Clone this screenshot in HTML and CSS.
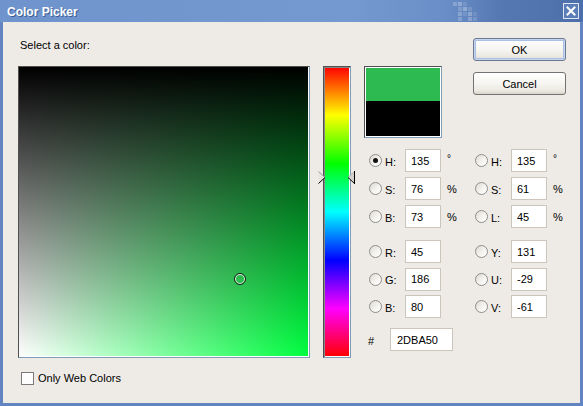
FILE: index.html
```html
<!DOCTYPE html>
<html>
<head>
<meta charset="utf-8">
<title>Color Picker</title>
<link rel="stylesheet" href="styles.css">
</head>
<body>
<div class="window">
  <div class="titlebar">
    <span class="title">Color Picker</span>
    <svg class="deco" width="28" height="22" viewBox="0 0 28 22">
      <rect x="0" y="2" width="4" height="4" fill="#fff" opacity=".22"/>
      <rect x="5" y="2" width="4" height="4" fill="#fff" opacity=".28"/>
      <rect x="10" y="2" width="4" height="4" fill="#fff" opacity=".12"/>
      <rect x="5" y="7" width="4" height="4" fill="#fff" opacity=".18"/>
      <rect x="10" y="7" width="4" height="4" fill="#fff" opacity=".3"/>
      <rect x="15" y="7" width="4" height="4" fill="#fff" opacity=".14"/>
      <rect x="5" y="12" width="4" height="4" fill="#fff" opacity=".24"/>
      <rect x="10" y="12" width="4" height="4" fill="#fff" opacity=".12"/>
      <rect x="15" y="12" width="4" height="4" fill="#fff" opacity=".28"/>
      <rect x="20" y="12" width="4" height="4" fill="#fff" opacity=".1"/>
      <rect x="5" y="17" width="4" height="4" fill="#fff" opacity=".2"/>
      <rect x="15" y="17" width="4" height="4" fill="#fff" opacity=".24"/>
      <rect x="20" y="17" width="4" height="4" fill="#fff" opacity=".14"/>
    </svg>
    <div class="close">
      <svg width="14" height="14" viewBox="0 0 14 14"><path d="M3.5 3.5 L10.5 10.5 M10.5 3.5 L3.5 10.5" stroke="#fff" stroke-width="2" stroke-linecap="square"/></svg>
    </div>
  </div>
  <div class="body">
    <div class="pick-col">
      <div class="prompt">Select a color:</div>
      <div class="field sunken"><div class="marker"></div></div>
      <label class="check"><span class="box"></span>Only Web Colors</label>
    </div>
    <div class="hue sunken">
      <svg class="arrow arrow-left" width="8" height="13" viewBox="0 0 8 13">
        <polygon points="0.5,0.5 7,6.5 0.5,12.5" fill="#e6e4df"/>
        <path d="M0.5 0.5 L7 6.5" stroke="#9a9a9a" stroke-width="1" fill="none"/>
        <path d="M0.5 12.5 L7 6.5" stroke="#000" stroke-width="1" fill="none"/>
      </svg>
      <svg class="arrow arrow-right" width="8" height="13" viewBox="0 0 8 13">
        <polygon points="7.5,0.5 1,6.5 7.5,12.5" fill="#d4d2cc"/>
        <path d="M7.5 0.5 L1 6.5" stroke="#b0b0b0" stroke-width="1" fill="none"/>
        <path d="M7.5 0 L7.5 13 M1 6.5 L7.5 12.5" stroke="#000" stroke-width="1" fill="none"/>
      </svg>
    </div>
    <div class="side">
      <div class="side-top">
        <div class="swatch sunken">
          <div class="swatch-new"></div>
          <div class="swatch-old"></div>
        </div>
        <div class="buttons">
          <button class="btn btn-default">OK</button>
          <button class="btn">Cancel</button>
        </div>
      </div>
      <div class="fields">
        <div class="grid">
          <div class="cell"><span class="radio on"></span><span class="lbl">H:</span><input class="num" value="135"><span class="unit deg">°</span></div>
          <div class="cell"><span class="radio"></span><span class="lbl">H:</span><input class="num" value="135"><span class="unit deg">°</span></div>
          <div class="cell"><span class="radio"></span><span class="lbl">S:</span><input class="num" value="76"><span class="unit">%</span></div>
          <div class="cell"><span class="radio"></span><span class="lbl">S:</span><input class="num" value="61"><span class="unit">%</span></div>
          <div class="cell"><span class="radio"></span><span class="lbl">B:</span><input class="num" value="73"><span class="unit">%</span></div>
          <div class="cell"><span class="radio"></span><span class="lbl">L:</span><input class="num" value="45"><span class="unit">%</span></div>
        </div>
        <div class="grid grid-2">
          <div class="cell"><span class="radio"></span><span class="lbl">R:</span><input class="num" value="45"></div>
          <div class="cell"><span class="radio"></span><span class="lbl">Y:</span><input class="num" value="131"></div>
          <div class="cell"><span class="radio"></span><span class="lbl">G:</span><input class="num" value="186"></div>
          <div class="cell"><span class="radio"></span><span class="lbl">U:</span><input class="num" value="-29"></div>
          <div class="cell"><span class="radio"></span><span class="lbl">B:</span><input class="num" value="80"></div>
          <div class="cell"><span class="radio"></span><span class="lbl">V:</span><input class="num" value="-61"></div>
        </div>
        <div class="hex"><span class="hash">#</span><input class="hex-input" value="2DBA50"></div>
      </div>
    </div>
  </div>
</div>
</body>
</html>
```

FILE: styles.css
```css
html, body {
  margin: 0;
  padding: 0;
}
body {
  font-family: "Liberation Sans", Arial, sans-serif;
  font-size: 11px;
  color: #000;
}
.window {
  width: 583px;
  height: 406px;
  display: flex;
  flex-direction: column;
  background: #6285c2;
}
.titlebar {
  height: 22px;
  flex: none;
  display: flex;
  align-items: flex-start;
  background: linear-gradient(to right, #6f93cc 0%, #7499d0 60%, #6a8fc8 76%, #5678b2 86%, #4c6fab 100%);
}
.title {
  padding: 1px 0 0 7px;
  line-height: 22px;
  font-size: 12px;
  font-weight: bold;
  color: #fff;
  text-shadow: 1px 1px 0 #3d5d94;
}
.deco {
  margin-left: auto;
  display: block;
}
.close {
  margin: 3px 4px 0 82px;
  width: 16px;
  height: 16px;
  box-sizing: border-box;
  border: 1px solid #dfe6f2;
  background: #5b7db8;
  display: flex;
  align-items: center;
  justify-content: center;
}
.close svg { display: block; }
.body {
  flex: 1;
  margin: 0 3px 3px;
  background: #eeebe6;
  display: flex;
  align-items: flex-start;
  padding: 16px 0 0 15px;
}
.sunken {
  box-sizing: border-box;
  border: 1px solid;
  border-color: #505050 #7f9db9 #7f9db9 #505050;
  box-shadow: inset -1px -1px 0 #fff;
}
.pick-col {
  width: 292px;
  display: flex;
  flex-direction: column;
}
.prompt {
  margin-top: 1px;
  padding-left: 2px;
  line-height: 13px;
}
.field {
  margin-top: 14px;
  width: 292px;
  height: 292px;
  position: relative;
  background:
    linear-gradient(to top, rgba(0,0,0,0), #000),
    linear-gradient(to right, #ffffff, #00ff40);
}
.marker {
  position: absolute;
  left: 215px;
  top: 206px;
  width: 12px;
  height: 12px;
  box-sizing: border-box;
  border: 1.5px solid #1a1a1a;
  border-radius: 50%;
  box-shadow: inset 0 0 0 1px #e8ffe8;
}
.check {
  margin: 14px 0 0 3px;
  display: flex;
  align-items: center;
  line-height: 13px;
}
.box {
  width: 13px;
  height: 13px;
  box-sizing: border-box;
  border: 1px solid #7a7a7a;
  background: #fdfdfd;
  margin-right: 4px;
}
.hue {
  margin: 28px 0 0 13px;
  width: 28px;
  height: 292px;
  position: relative;
  background: linear-gradient(to bottom, #f00 0%, #ff0 16.67%, #0f0 33.33%, #0ff 50%, #00f 66.67%, #f0f 83.33%, #f00 100%);
  box-shadow: inset 1px 1px 0 #888, inset -1px -1px 0 #fff;
}
.arrow {
  position: absolute;
  top: 104px;
  display: block;
}
.arrow-left { left: -6px; }
.arrow-right { left: 23px; }
.side {
  margin-left: 13px;
  width: 202px;
  display: flex;
  flex-direction: column;
}
.side-top {
  display: flex;
  justify-content: space-between;
  align-items: flex-start;
}
.swatch {
  margin-top: 28px;
  width: 78px;
  height: 72px;
  padding: 1px;
  background: #fff;
  display: flex;
  flex-direction: column;
}
.swatch-new { flex: 1; background: #2dba50; }
.swatch-old { flex: 1.06; background: #000; }
.buttons {
  width: 93px;
  display: flex;
  flex-direction: column;
  gap: 11px;
}
.btn {
  height: 23px;
  box-sizing: border-box;
  border: 1px solid #737373;
  border-radius: 3px;
  background: linear-gradient(to bottom, #ffffff 0%, #f6f5f1 50%, #ebe8e1 85%, #d8d4ca 100%);
  font-family: inherit;
  font-size: 11px;
  color: #000;
  padding: 0;
}
.btn-default {
  border-color: #6a7891;
  box-shadow: inset 0 0 0 1px #c7d6ee, inset 0 0 0 2px #a9bfe3;
}
.fields {
  margin-top: 11px;
  padding-left: 4px;
  display: flex;
  flex-direction: column;
}
.grid {
  display: grid;
  grid-template-columns: 106px 106px;
  row-gap: 5px;
}
.grid-2 {
  margin-top: 12px;
  row-gap: 4.5px;
}
.cell {
  height: 23px;
  display: flex;
  align-items: center;
}
.radio {
  margin-left: 1px;
  width: 13px;
  height: 13px;
  box-sizing: border-box;
  border: 1px solid #8e8e8e;
  border-radius: 50%;
  background: linear-gradient(135deg, #dedad2 0%, #f4f3ef 55%, #ffffff 100%);
  position: relative;
  flex: none;
}
.radio.on::after {
  content: "";
  position: absolute;
  left: 3px;
  top: 3px;
  width: 5px;
  height: 5px;
  border-radius: 50%;
  background: #111;
}
.lbl {
  margin-left: 3px;
  width: 20px;
  padding-top: 2px;
}
.num, .hex-input {
  height: 23px;
  box-sizing: border-box;
  border: 1px solid #cbc5bb;
  background: #fff;
  padding: 0 5px;
  font-family: inherit;
  font-size: 11px;
  color: #000;
  outline: none;
  margin: 0;
}
.num { width: 36px; }
.unit {
  margin-left: 6px;
}
.deg {
  font-size: 10px;
  margin-top: -5px;
}
.hex {
  margin-top: 10px;
  display: flex;
  align-items: center;
}
.hash {
  width: 22px;
  padding-top: 3px;
}
.hex-input {
  width: 63px;
  padding-left: 6px;
}
```
